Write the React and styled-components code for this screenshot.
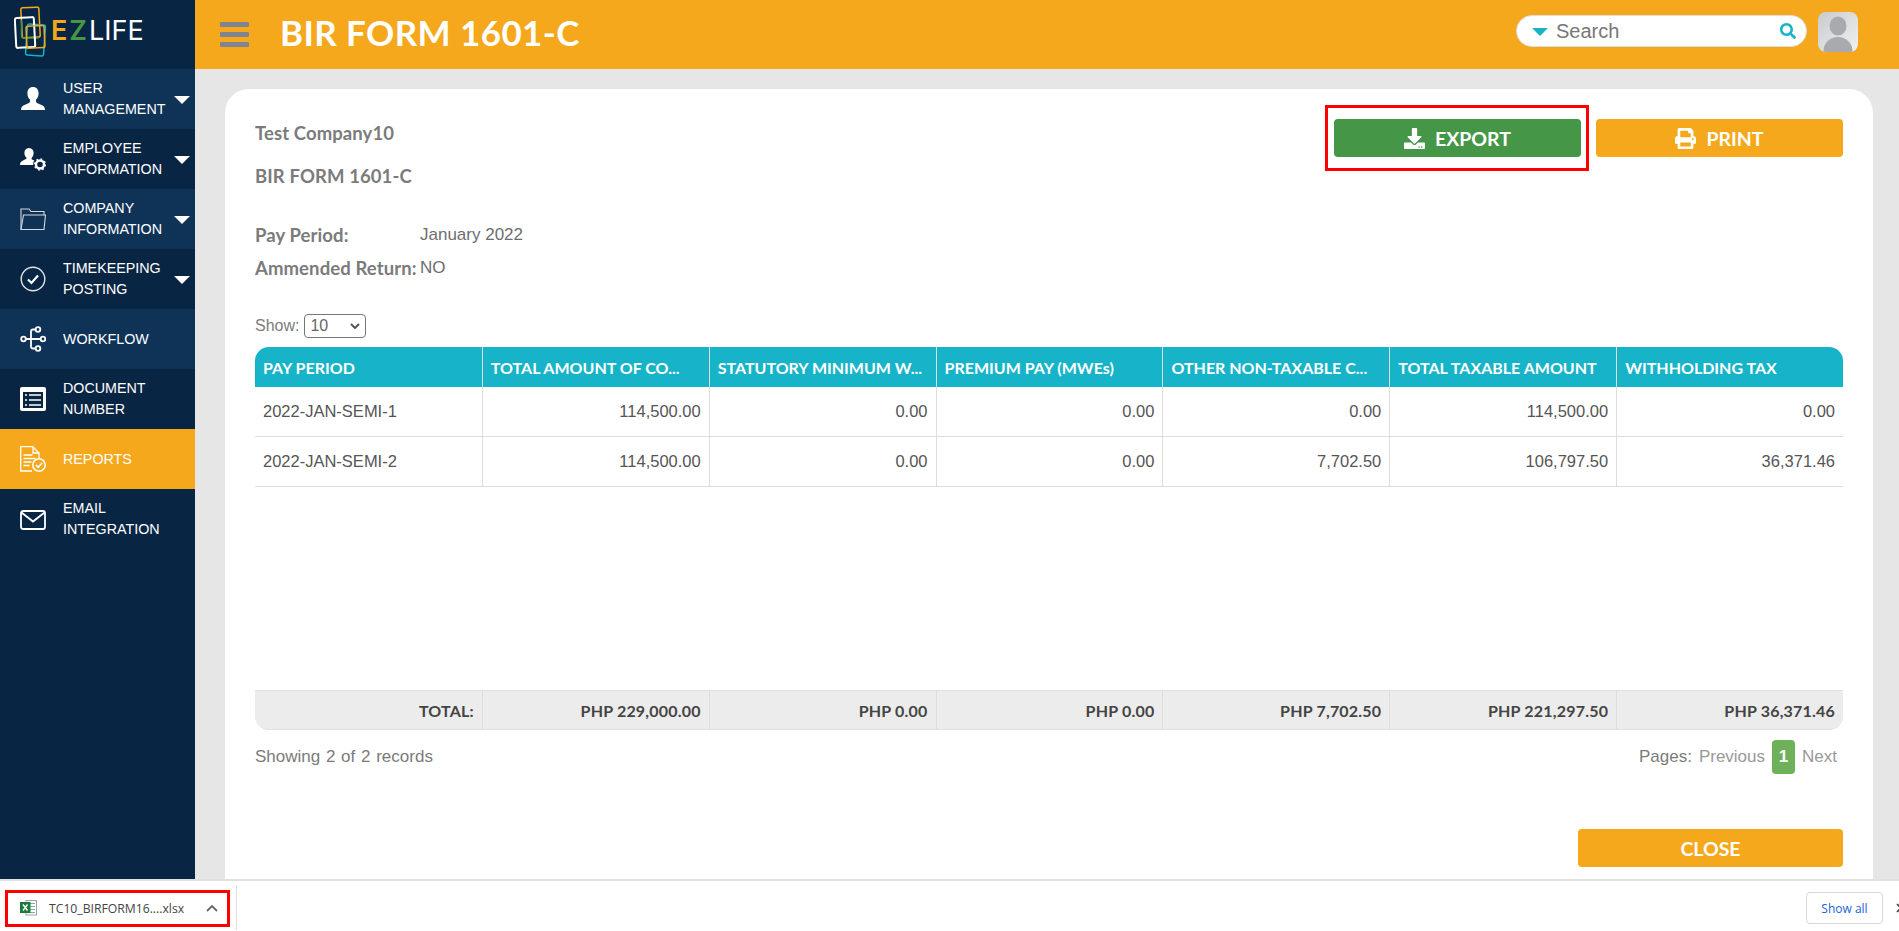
import React from 'react'
import styled, { createGlobalStyle } from 'styled-components'
import { FaDownload, FaPrint, FaSearch } from 'react-icons/fa'

const ORANGE = '#f6a81c'
const GREEN = '#459647'
const TEAL = '#17b3c8'
const HEADING = '"Lato", "Liberation Sans", sans-serif'
const BODY = '"Liberation Sans", Arial, sans-serif'

const GlobalStyle = createGlobalStyle`
  html, body {
    margin: 0;
    padding: 0;
    height: 100%;
    overflow: hidden;
    background: #e6e6e6;
    font-family: ${BODY};
  }
  * { box-sizing: border-box; }
`

const Page = styled.div`
  display: flex;
  flex-direction: column;
  height: 100vh;
  overflow: hidden;
`

const Workspace = styled.div`
  display: flex;
  flex: 1;
  min-height: 0;
`

const Sidebar = styled.aside`
  width: 195px;
  flex: none;
  background: #092544;
`

const LogoBox = styled.div`
  display: flex;
  align-items: center;
  height: 69px;
  padding-left: 14px;
`

const LogoSvg = styled.svg`
  width: 37px;
  height: 52px;
  flex: none;
  margin-top: -8px;
`

const LogoText = styled.div`
  font-family: "Inter", ${BODY};
  font-size: 27px;
  line-height: 1;
  margin-top: -9px;
  color: #fff;
`

const LogoLetter = styled.span`
  color: ${p => p.$color};
  font-weight: 600;
  margin-right: 2px;
`

const NavItem = styled.div`
  position: relative;
  display: flex;
  align-items: center;
  height: 60px;
  padding-left: 20px;
  background: ${p => (p.$active ? ORANGE : p.$alt ? '#0e3357' : '#092544')};
`

const NavIcon = styled.svg`
  width: 26px;
  height: 26px;
  flex: none;
  margin-right: 17px;
  color: #fff;
`

const NavLabel = styled.div`
  width: 108px;
  color: #fff;
  font-size: 14.3px;
  line-height: 21px;
`

const Caret = styled.span`
  position: absolute;
  right: 5px;
  top: 27px;
  width: 0;
  height: 0;
  border-left: 8px solid transparent;
  border-right: 8px solid transparent;
  border-top: 8px solid #fff;
`

const Main = styled.main`
  flex: 1;
  min-width: 0;
  display: flex;
  flex-direction: column;
`

const Header = styled.header`
  display: flex;
  align-items: center;
  height: 69px;
  flex: none;
  background: ${ORANGE};
  padding: 0 41px 5px 25px;
`

const Burger = styled.div`
  display: flex;
  flex-direction: column;
  gap: 5px;
  width: 29px;
  margin-right: 31px;
  margin-top: 5px;
`

const BurgerBar = styled.span`
  height: 5px;
  background: #7f8490;
  border-radius: 1px;
`

const Title = styled.h1`
  margin: 0;
  flex: 1;
  color: #fff;
  font-family: ${HEADING};
  font-size: 35px;
  font-weight: 700;
  letter-spacing: 0.4px;
`

const SearchBox = styled.div`
  display: flex;
  align-items: center;
  width: 291px;
  height: 32px;
  margin-top: -2px;
  padding: 0 10px 0 15px;
  background: #fff;
  border: 1px solid #ddd;
  border-radius: 16px;
`

const SearchCaret = styled.span`
  width: 0;
  height: 0;
  border-left: 8px solid transparent;
  border-right: 8px solid transparent;
  border-top: 8px solid ${TEAL};
  margin-right: 8px;
  margin-top: 2px;
`

const SearchText = styled.span`
  flex: 1;
  color: #777;
  font-size: 20px;
`

const Avatar = styled.svg`
  width: 40px;
  height: 40px;
  margin-left: 11px;
  border-radius: 8px;
`

const Content = styled.div`
  flex: 1;
  min-height: 0;
  padding: 20px 26px 0 30px;
  overflow: hidden;
`

const Card = styled.section`
  height: 100%;
  padding: 30px 30px 0;
  background: #fff;
  border-radius: 24px 24px 0 0;
`

const TopRow = styled.div`
  display: flex;
  justify-content: space-between;
  align-items: flex-start;
`

const Info = styled.div`
  color: #7b7b7b;
  font-family: ${HEADING};
  font-size: 18.5px;
  font-weight: 700;
  letter-spacing: 0.1px;
`

const InfoLine = styled.div`
  line-height: 28px;
  margin-bottom: ${p => p.$gap}px;
`

const InfoRow = styled.div`
  display: flex;
  align-items: center;
  height: 33px;
`

const InfoLabel = styled.span`
  width: 165px;
  flex: none;
  white-space: nowrap;
`

const InfoValue = styled.span`
  color: #6d6d6d;
  font-family: ${BODY};
  font-size: 17px;
  font-weight: 400;
  letter-spacing: 0;
`

const Actions = styled.div`
  display: flex;
  gap: 15px;
`

const Highlight = styled.div`
  position: relative;
`

const RedFrame = styled.span`
  position: absolute;
  inset: -14px -8px -14px -9px;
  border: 3px solid #f00;
  pointer-events: none;
`

const ActionButton = styled.button`
  display: flex;
  align-items: center;
  justify-content: center;
  gap: 10px;
  width: ${p => p.$width || 247}px;
  height: 38px;
  padding: 0;
  border: 0;
  border-radius: 4px;
  background: ${p => p.$bg || ORANGE};
  color: #fff;
  font-family: ${HEADING};
  font-size: 19.5px;
  font-weight: 700;
  svg { width: 21px; height: 21px; }
`

const ShowRow = styled.div`
  display: flex;
  align-items: center;
  gap: 5px;
  height: 24px;
  margin-top: 30px;
  color: #7b7b7b;
  font-size: 16px;
`

const SelectBox = styled.div`
  display: flex;
  align-items: center;
  justify-content: space-between;
  width: 62px;
  height: 24px;
  padding: 0 5px;
  border: 1px solid #767676;
  border-radius: 4px;
  color: #666;
`

const TableWrap = styled.div`
  margin-top: 9px;
`

const Row = styled.div`
  display: grid;
  grid-template-columns: repeat(7, 1fr);
`

const HeadRow = styled(Row)`
  height: 40px;
  background: ${TEAL};
  border-radius: 14px 14px 0 0;
`

const HeadCell = styled.div`
  display: flex;
  align-items: center;
  padding-left: 8px;
  color: #fff;
  font-family: ${HEADING};
  font-size: 16px;
  font-weight: 700;
  white-space: nowrap;
  overflow: hidden;
  border-left: ${p => (p.$first ? '0' : '1px solid #ddd')};
`

const Body = styled.div`
  height: 303px;
`

const BodyRow = styled(Row)`
  height: 50px;
  border-bottom: 1px solid #ddd;
`

const Cell = styled.div`
  display: flex;
  align-items: center;
  justify-content: ${p => (p.$first ? 'flex-start' : 'flex-end')};
  padding: 0 8px;
  color: #555;
  font-size: 16.5px;
  border-left: ${p => (p.$first ? '0' : '1px solid #ddd')};
`

const TotalRow = styled(Row)`
  height: 40px;
  background: #ececec;
  border: 1px solid #e0e0e0;
  border-width: 1px 0;
  border-radius: 0 0 14px 14px;
`

const TotalCell = styled.div`
  display: flex;
  align-items: center;
  justify-content: flex-end;
  padding-right: 8px;
  color: #444;
  font-family: ${HEADING};
  font-size: 16px;
  font-weight: 700;
  letter-spacing: 0.2px;
  border-left: ${p => (p.$first ? '0' : '1px solid #ddd')};
`

const Footer = styled.div`
  display: flex;
  justify-content: space-between;
  align-items: center;
  height: 34px;
  margin-top: 10px;
  color: #7b7b7b;
  font-size: 17px;
  word-spacing: 1px;
`

const Pager = styled.div`
  display: flex;
  align-items: center;
  gap: 7px;
  padding-right: 6px;
`

const PagerLink = styled.span`
  color: #999;
`

const PageNumber = styled.span`
  display: flex;
  align-items: center;
  justify-content: center;
  width: 23px;
  height: 34px;
  background: #6fb05b;
  border-radius: 4px;
  color: #fff;
  font-weight: 700;
`

const CloseRow = styled.div`
  display: flex;
  justify-content: flex-end;
  margin-top: 55px;
`

const DownloadBar = styled.footer`
  display: flex;
  align-items: center;
  height: 52px;
  flex: none;
  padding: 4px 16px 0 5px;
  background: #fff;
  border-top: 2px solid #e0e0e0;
`

const DownloadItem = styled.div`
  display: flex;
  align-items: center;
  width: 225px;
  height: 37px;
  padding: 0 9px 0 12px;
  border: 3px solid #f00;
`

const FileName = styled.span`
  flex: 1;
  margin-left: 12px;
  color: #444;
  font-family: "Open Sans", ${BODY};
  font-size: 12.2px;
  white-space: nowrap;
`

const BarDivider = styled.span`
  width: 1px;
  height: 44px;
  margin-left: 6px;
  background: #ddd;
`

const ShowAll = styled.button`
  margin-left: auto;
  width: 77px;
  height: 32px;
  padding: 0;
  background: #fff;
  border: 1px solid #d8d8d8;
  border-radius: 4px;
  color: #1a66d6;
  font-family: "Open Sans", ${BODY};
  font-size: 12px;
`

const BarClose = styled.svg`
  flex: none;
  width: 10px;
  height: 10px;
  margin-left: 13px;
  margin-right: -23px;
`

const UserIcon = () => (
  <NavIcon viewBox="0 0 26 26" fill="currentColor">
    <path d="M13 1c3.600 0 5.600 2.700 5.600 6.200 0 2.600-1 5-2.600 6.400v2.200c0 1.200 2.500 2 5 3 2.400 1 4 2.100 4 5.200H1c0-3.100 1.600-4.200 4-5.200 2.500-1 5-1.800 5-3v-2.200C8.400 12.200 7.400 9.800 7.400 7.200 7.400 3.700 9.400 1 13 1z" />
  </NavIcon>
)

const EmployeeIcon = () => (
  <NavIcon viewBox="0 0 26 26" fill="currentColor">
    <path d="M9 2c3 0 4.600 2.200 4.600 5 0 2-.8 3.800-2 4.800v1.400c1 .5 2 .9 2.700 1.300-1 1.300-1.300 3-1 4.500H0c0-2.800 1.200-3.800 3-4.600 1.800-.8 3.600-1.400 3.600-2.300v-.3C5.200 10.800 4.400 9 4.400 7 4.400 4.200 6 2 9 2z" />
    <circle cx="20" cy="18.500" r="4" fill="none" stroke="currentColor" strokeWidth="2.400" />
    <circle cx="20" cy="18.500" r="5.500" fill="none" stroke="currentColor" strokeWidth="1.400" strokeDasharray="1.800 2.500" />
  </NavIcon>
)

const FolderIcon = () => (
  <NavIcon viewBox="0 0 26 26" fill="none" stroke="#d5d8dc" strokeWidth="1.100">
    <path d="M1 23.500V3h8l2 2.500h13V9" />
    <path d="M1 23.500 3.500 9H25.500L24 23.500z" />
  </NavIcon>
)

const CheckIcon = () => (
  <NavIcon viewBox="0 0 26 26" fill="none" stroke="#e2e4e7" strokeWidth="1.400">
    <circle cx="13" cy="13" r="11.800" />
    <path d="M8 13.500l3.500 3.500 6.500-7.500" stroke="#fff" strokeWidth="2.200" />
  </NavIcon>
)

const WorkflowIcon = () => (
  <NavIcon viewBox="0 0 26 26" fill="none" stroke="currentColor" strokeWidth="1.800">
    <circle cx="3.500" cy="13" r="2.300" />
    <circle cx="18" cy="3.500" r="2.300" />
    <circle cx="23" cy="13" r="2.300" />
    <circle cx="18" cy="22.500" r="2.300" />
    <path d="M6 13h14.500M15.500 3.500H13c-1.500 0-2 1-2 2v15c0 1 .5 2 2 2h2.500" />
  </NavIcon>
)

const DocumentIcon = () => (
  <NavIcon viewBox="0 0 26 26">
    <rect x="0" y="1" width="26" height="24" rx="2" fill="#fff" />
    <rect x="3" y="6" width="20" height="16" fill="#092544" />
    <path d="M5 9h2M9 9h12M5 14h2M9 14h12M5 19h2M9 19h12" stroke="#fff" strokeWidth="1.600" />
  </NavIcon>
)

const ReportIcon = () => (
  <NavIcon viewBox="0 0 26 26" fill="none" stroke="currentColor" strokeWidth="1.300">
    <path d="M12 25H.7V.7h12L19 7v6" />
    <path d="M13 1v6h6" />
    <path d="M3.500 9h9M3.500 12.500h12M3.500 16h8M3.500 19.500h6" />
    <circle cx="19" cy="19" r="6.200" fill={ORANGE} strokeWidth="1.500" />
    <path d="M16 19l2.200 2.300 4-4.300" strokeWidth="1.800" />
  </NavIcon>
)

const MailIcon = () => (
  <NavIcon viewBox="0 0 26 26" fill="none" stroke="currentColor" strokeWidth="1.800">
    <rect x="1" y="5" width="24" height="18" rx="2" />
    <path d="M1.500 6.500 13 15.500 24.500 6.500" />
  </NavIcon>
)

const SelectChevron = () => (
  <svg width="10" height="6" viewBox="0 0 10 6" fill="none" stroke="#555" strokeWidth="2">
    <path d="M1 1l4 4 4-4" />
  </svg>
)

const UpChevron = () => (
  <svg width="12" height="8" viewBox="0 0 12 8" fill="none" stroke="#666" strokeWidth="1.800">
    <path d="M1 7l5-5 5 5" />
  </svg>
)

const ExcelIcon = () => (
  <svg width="17" height="16" viewBox="0 0 17 16" style={{ flex: 'none' }}>
    <rect x="6" y="0.500" width="10.500" height="14.500" fill="#fff" stroke="#9aa5ad" />
    <path d="M9 3.500h6M9 6.500h6M9 9.500h6M9 12.500h6" stroke="#7db48c" />
    <rect x="0" y="2" width="10.500" height="11" fill="#1e7a3c" />
    <path d="M3 4.500l4.500 6M7.500 4.500l-4.500 6" stroke="#fff" strokeWidth="1.400" />
  </svg>
)

const LogoMark = () => (
  <LogoSvg viewBox="0 0 37 52" fill="none" strokeWidth="1.500">
    <rect x="7.500" y="2.500" width="18" height="30" rx="2" stroke={ORANGE} transform="rotate(-3 16 17)" />
    <path d="M7.500 15v16c0 1 .8 2 2 2h15" stroke={GREEN} />
    <rect x="12.500" y="19.500" width="18" height="31" rx="2" stroke={TEAL} transform="rotate(4 21 35)" />
    <rect x="1.500" y="12.500" width="19" height="30" rx="2" stroke="#fff" strokeWidth="2" transform="rotate(-3 11 27)" />
    <rect x="12.500" y="21" width="18" height="22" rx="2" stroke={ORANGE} transform="rotate(-3 21 32)" />
  </LogoSvg>
)

const navItems = [
  { label: 'USER MANAGEMENT', Icon: UserIcon, caret: true },
  { label: 'EMPLOYEE INFORMATION', Icon: EmployeeIcon, caret: true },
  { label: 'COMPANY INFORMATION', Icon: FolderIcon, caret: true },
  { label: 'TIMEKEEPING POSTING', Icon: CheckIcon, caret: true },
  { label: 'WORKFLOW', Icon: WorkflowIcon },
  { label: 'DOCUMENT NUMBER', Icon: DocumentIcon },
  { label: 'REPORTS', Icon: ReportIcon, active: true },
  { label: 'EMAIL INTEGRATION', Icon: MailIcon },
]

const columns = [
  'PAY PERIOD',
  'TOTAL AMOUNT OF CO...',
  'STATUTORY MINIMUM W...',
  'PREMIUM PAY (MWEs)',
  'OTHER NON-TAXABLE C...',
  'TOTAL TAXABLE AMOUNT',
  'WITHHOLDING TAX',
]

const rows = [
  ['2022-JAN-SEMI-1', '114,500.00', '0.00', '0.00', '0.00', '114,500.00', '0.00'],
  ['2022-JAN-SEMI-2', '114,500.00', '0.00', '0.00', '7,702.50', '106,797.50', '36,371.46'],
]

const totals = ['TOTAL:', 'PHP 229,000.00', 'PHP 0.00', 'PHP 0.00', 'PHP 7,702.50', 'PHP 221,297.50', 'PHP 36,371.46']

const App = () => (
  <Page>
    <GlobalStyle />
    <Workspace>
      <Sidebar>
        <LogoBox>
          <LogoMark />
          <LogoText>
            <LogoLetter $color={ORANGE}>E</LogoLetter>
            <LogoLetter $color={GREEN}>Z</LogoLetter>
            LIFE
          </LogoText>
        </LogoBox>
        {navItems.map(({ label, Icon, caret, active }, index) => (
          <NavItem key={label} $alt={index % 2 === 0} $active={active}>
            <Icon />
            <NavLabel>{label}</NavLabel>
            {caret && <Caret />}
          </NavItem>
        ))}
      </Sidebar>
      <Main>
        <Header>
          <Burger>
            <BurgerBar />
            <BurgerBar />
            <BurgerBar />
          </Burger>
          <Title>BIR FORM 1601-C</Title>
          <SearchBox>
            <SearchCaret />
            <SearchText>Search</SearchText>
            <FaSearch color={TEAL} size={16} />
          </SearchBox>
          <Avatar viewBox="0 0 40 40">
            <defs>
              <linearGradient id="avatarBg" x1="0" y1="0" x2="1" y2="1">
                <stop offset="0" stopColor="#c9cace" />
                <stop offset="1" stopColor="#f1f1f1" />
              </linearGradient>
            </defs>
            <rect width="40" height="40" fill="url(#avatarBg)" />
            <ellipse cx="20" cy="14" rx="8.500" ry="9.500" fill="#a9aab0" />
            <ellipse cx="20" cy="39" rx="14.500" ry="14" fill="#a9aab0" />
          </Avatar>
        </Header>
        <Content>
          <Card>
            <TopRow>
              <Info>
                <InfoLine $gap={15}>Test Company10</InfoLine>
                <InfoLine $gap={28}>BIR FORM 1601-C</InfoLine>
                <InfoRow>
                  <InfoLabel>Pay Period:</InfoLabel>
                  <InfoValue>January 2022</InfoValue>
                </InfoRow>
                <InfoRow>
                  <InfoLabel>Ammended Return:</InfoLabel>
                  <InfoValue>NO</InfoValue>
                </InfoRow>
              </Info>
              <Actions>
                <Highlight>
                  <ActionButton $bg={GREEN}>
                    <FaDownload />
                    EXPORT
                  </ActionButton>
                  <RedFrame />
                </Highlight>
                <ActionButton>
                  <FaPrint />
                  PRINT
                </ActionButton>
              </Actions>
            </TopRow>
            <ShowRow>
              Show:
              <SelectBox>
                10
                <SelectChevron />
              </SelectBox>
            </ShowRow>
            <TableWrap>
              <HeadRow>
                {columns.map((column, index) => (
                  <HeadCell key={column} $first={index === 0}>{column}</HeadCell>
                ))}
              </HeadRow>
              <Body>
                {rows.map(row => (
                  <BodyRow key={row[0]}>
                    {row.map((value, index) => (
                      <Cell key={index} $first={index === 0}>{value}</Cell>
                    ))}
                  </BodyRow>
                ))}
              </Body>
              <TotalRow>
                {totals.map((value, index) => (
                  <TotalCell key={index} $first={index === 0}>{value}</TotalCell>
                ))}
              </TotalRow>
            </TableWrap>
            <Footer>
              <span>Showing 2 of 2 records</span>
              <Pager>
                <span>Pages:</span>
                <PagerLink>Previous</PagerLink>
                <PageNumber>1</PageNumber>
                <PagerLink>Next</PagerLink>
              </Pager>
            </Footer>
            <CloseRow>
              <ActionButton $width={265}>CLOSE</ActionButton>
            </CloseRow>
          </Card>
        </Content>
      </Main>
    </Workspace>
    <DownloadBar>
      <DownloadItem>
        <ExcelIcon />
        <FileName>TC10_BIRFORM16....xlsx</FileName>
        <UpChevron />
      </DownloadItem>
      <BarDivider />
      <ShowAll>Show all</ShowAll>
      <BarClose viewBox="0 0 10 10" fill="none" stroke="#444" strokeWidth="1.600">
        <path d="M1 1l8 8M9 1l-8 8" />
      </BarClose>
    </DownloadBar>
  </Page>
)

export default App
